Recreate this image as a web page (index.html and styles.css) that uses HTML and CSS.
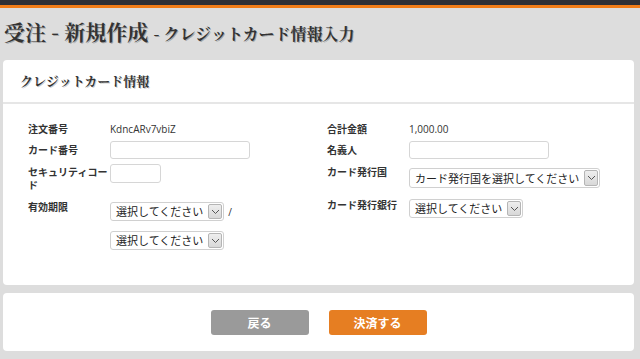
FILE: index.html
```html
<!DOCTYPE html>
<html lang="ja">
<head>
    <meta charset="UTF-8">
    <meta name="viewport" content="width=device-width, initial-scale=1.0">
    <title>受注 - 新規作成 - クレジットカード情報入力</title>
    <link rel="stylesheet" href="styles.css">
</head>
<body>
    <div class="topbar"></div>
    <h1 class="page-title">受注 - 新規作成 <span class="sub">- クレジットカード情報入力</span></h1>

    <div class="card">
        <div class="card-header">クレジットカード情報</div>
        <div class="card-body">
            <div class="col">
                <div class="row r1">
                    <div class="label">注文番号</div>
                    <div class="value">KdncARv7vbiZ</div>
                </div>
                <div class="row r2">
                    <div class="label">カード番号</div>
                    <input type="text" class="text-input wide">
                </div>
                <div class="row r3">
                    <div class="label">セキュリティコード</div>
                    <input type="text" class="text-input short">
                </div>
                <div class="row r4">
                    <div class="label">有効期限</div>
                    <div class="field-stack">
                        <div class="field-line">
                            <span class="select">
                                <span class="select-text">選択してください</span>
                                <span class="select-arrow"><svg width="9" height="6" viewBox="0 0 9 6"><polyline points="1,1 4.5,4.5 8,1" fill="none" stroke="#555" stroke-width="1"/></svg></span>
                            </span>
                            <span class="slash">/</span>
                        </div>
                        <div class="field-line second">
                            <span class="select">
                                <span class="select-text">選択してください</span>
                                <span class="select-arrow"><svg width="9" height="6" viewBox="0 0 9 6"><polyline points="1,1 4.5,4.5 8,1" fill="none" stroke="#555" stroke-width="1"/></svg></span>
                            </span>
                        </div>
                    </div>
                </div>
            </div>
            <div class="col">
                <div class="row r1">
                    <div class="label">合計金額</div>
                    <div class="value">1,000.00</div>
                </div>
                <div class="row r2">
                    <div class="label">名義人</div>
                    <input type="text" class="text-input wide">
                </div>
                <div class="row r3b">
                    <div class="label">カード発行国</div>
                    <span class="select tall">
                        <span class="select-text">カード発行国を選択してください</span>
                        <span class="select-arrow"><svg width="9" height="6" viewBox="0 0 9 6"><polyline points="1,1 4.5,4.5 8,1" fill="none" stroke="#555" stroke-width="1"/></svg></span>
                    </span>
                </div>
                <div class="row r4b">
                    <div class="label">カード発行銀行</div>
                    <span class="select">
                        <span class="select-text">選択してください</span>
                        <span class="select-arrow"><svg width="9" height="6" viewBox="0 0 9 6"><polyline points="1,1 4.5,4.5 8,1" fill="none" stroke="#555" stroke-width="1"/></svg></span>
                    </span>
                </div>
            </div>
        </div>
    </div>

    <div class="card actions">
        <button class="btn btn-back">戻る</button>
        <button class="btn btn-pay">決済する</button>
    </div>
</body>
</html>
```

FILE: styles.css
```css
body {
    margin: 0;
    background-color: #dddddd;
    font-family: "Open Sans", "Noto Sans CJK JP", sans-serif;
    color: #333333;
}
.topbar {
    height: 5px;
    background-color: #2e3036;
    border-bottom: 3px solid #f07d19;
}
.page-title {
    margin: 0;
    padding: 11px 0 0 4px;
    height: 38px;
    box-sizing: border-box;
    font-family: "Noto Serif CJK JP", "Noto Sans CJK JP", serif;
    font-size: 21px;
    line-height: 24px;
    font-weight: bold;
    color: #333333;
    text-shadow: 1px 1px 0 rgba(0, 0, 0, 0.25);
    white-space: nowrap;
}
.page-title .sub {
    font-size: 16px;
}
.card {
    background-color: #ffffff;
    margin: 14px 6px 0 3px;
    border-radius: 4px;
}
.card-header {
    height: 42px;
    line-height: 42px;
    padding-left: 17px;
    font-family: "Noto Serif CJK JP", "Noto Sans CJK JP", serif;
    font-size: 13px;
    font-weight: bold;
    text-shadow: 1px 1px 0 rgba(0, 0, 0, 0.2);
    border-bottom: 2px solid #e6e6e6;
}
.card-body {
    display: grid;
    grid-template-columns: 299px 1fr;
    padding: 18px 0 0 25px;
    height: 163px;
}
.col {
    display: flex;
    flex-direction: column;
}
.row {
    display: flex;
    align-items: flex-start;
}
.label {
    width: 82px;
    flex: none;
    font-family: "Noto Sans CJK JP", sans-serif;
    font-size: 10px;
    line-height: 13px;
    font-weight: bold;
    color: #333333;
}
.value {
    font-family: "Open Sans", "Noto Sans CJK JP", sans-serif;
    font-size: 10px;
    line-height: 13px;
    color: #333333;
}
.r1 .label, .r1 .value {
    line-height: 14px;
}
.r2 {
    margin-top: 5px;
}
.r2 .label {
    padding-top: 2px;
}
.r3 {
    margin-top: 5px;
}
.r3 .label {
    padding-top: 1px;
}
.r4 {
    margin-top: 7px;
}
.r4 .label {
    padding-top: 2px;
}
.r4 .field-stack {
    margin-top: 4px;
}
.r3b {
    margin-top: 6px;
}
.r3b .select {
    margin-top: 3px;
}
.r4b {
    margin-top: 10px;
}
.r4b .select {
    margin-top: 1px;
}
.text-input {
    box-sizing: border-box;
    height: 18px;
    margin: 0;
    border: 1px solid #d6d6d6;
    border-radius: 3px;
    background: #ffffff;
    padding: 0 4px;
}
.text-input.wide {
    width: 140px;
}
.text-input.short {
    width: 51px;
    height: 19px;
}
.field-stack {
    display: flex;
    flex-direction: column;
}
.field-line {
    display: flex;
    align-items: center;
}
.field-line.second {
    margin-top: 10px;
}
.slash {
    margin-left: 4px;
    font-size: 10px;
    color: #333333;
}
.select {
    box-sizing: border-box;
    display: inline-flex;
    align-items: stretch;
    height: 19px;
    border: 1px solid #d0d0d0;
    border-radius: 3px;
    background: #ffffff;
    overflow: hidden;
}
.select.tall {
    height: 20px;
}
.select-text {
    padding: 0 4px 0 5px;
    font-family: "Noto Sans CJK JP", sans-serif;
    font-size: 11px;
    line-height: 17px;
    color: #222222;
    white-space: nowrap;
}
.select.tall .select-text {
    line-height: 18px;
}
.select-arrow {
    width: 12px;
    margin: 1px;
    display: flex;
    align-items: center;
    justify-content: center;
    background: linear-gradient(#eeeeee, #d8d8d8);
    border: 1px solid #b5b5b5;
    border-radius: 2px;
}
.actions {
    margin-top: 8px;
    height: 58px;
    display: flex;
    justify-content: center;
    align-items: flex-start;
    gap: 20px;
    padding-top: 17px;
    box-sizing: border-box;
}
.btn {
    width: 98px;
    height: 25px;
    border: 0;
    border-radius: 3px;
    color: #ffffff;
    font-family: "Noto Sans CJK JP", sans-serif;
    font-size: 12px;
    font-weight: bold;
    padding: 0;
}
.btn-back {
    background-color: #9a9a9a;
}
.btn-pay {
    background-color: #e67e22;
}
```
